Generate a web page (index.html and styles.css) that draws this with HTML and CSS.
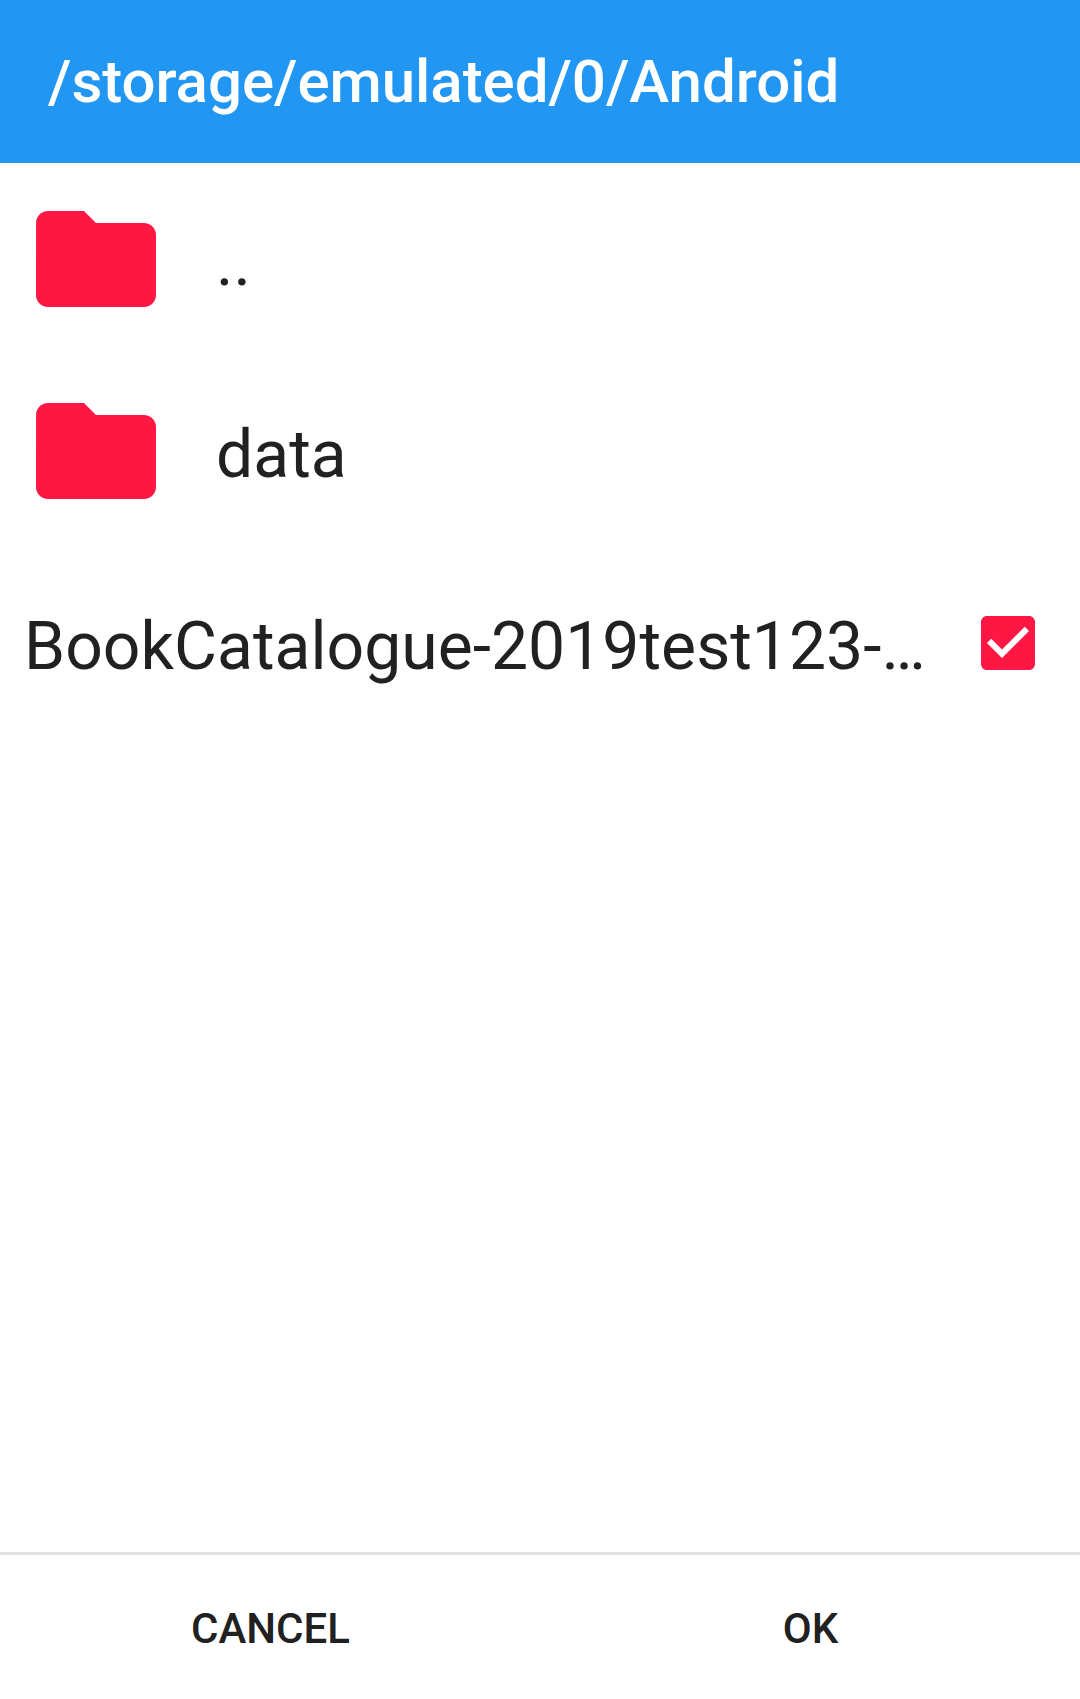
FILE: index.html
```html
<!DOCTYPE html>
<html lang="en">
<head>
<meta charset="utf-8">
<title>Choose a file</title>
<link rel="stylesheet" href="styles.css">
</head>
<body>
<header class="header">/storage/emulated/0/Android</header>
<main class="list">
  <div class="row">
    <svg class="folder" viewBox="0 0 24 24"><path d="M10 4H4c-1.1 0-1.99.9-1.99 2L2 18c0 1.1.9 2 2 2h16c1.1 0 2-.9 2-2V8c0-1.1-.9-2-2-2h-8l-2-2z"/></svg>
    <span class="name">..</span>
  </div>
  <div class="row">
    <svg class="folder" viewBox="0 0 24 24"><path d="M10 4H4c-1.1 0-1.99.9-1.99 2L2 18c0 1.1.9 2 2 2h16c1.1 0 2-.9 2-2V8c0-1.1-.9-2-2-2h-8l-2-2z"/></svg>
    <span class="name">data</span>
  </div>
  <div class="row file">
    <span class="name">BookCatalogue-2019test123-…</span>
    <svg class="checkbox" viewBox="0 0 24 24"><path d="M19 3H5c-1.11 0-2 .9-2 2v14c0 1.1.89 2 2 2h14c1.11 0 2-.9 2-2V5c0-1.1-.89-2-2-2zm-9 14l-5-5 1.41-1.41L10 14.17l7.59-7.59L19 8l-9 9z"/></svg>
  </div>
</main>
<footer class="actions">
  <button class="action">CANCEL</button>
  <button class="action">OK</button>
</footer>
</body>
</html>
```
FILE: styles.css
```css
* { box-sizing: border-box; }
body {
  margin: 0;
  height: 1699px;
  display: flex;
  flex-direction: column;
  background: #fff;
  color: #212121;
  font-family: Roboto, sans-serif;
}
.header {
  height: 163px;
  padding-left: 48px;
  background: #2196f3;
  color: #fff;
  font-size: 60px;
  font-weight: 500;
  letter-spacing: -0.03px;
  line-height: 163px;
  white-space: nowrap;
}
.list { flex: 1; }
.row {
  height: 192px;
  display: flex;
  align-items: center;
}
.folder {
  width: 144px;
  height: 144px;
  margin: 0 48px 0 24px;
  fill: #ff1744;
}
.name {
  padding-top: 6px;
  font-size: 66px;
  letter-spacing: 0.03px;
  line-height: 77px;
  white-space: nowrap;
}
.file {
  justify-content: space-between;
  padding: 0 36px 0 24px;
}
.checkbox { width: 72px; height: 72px; fill: #ff1744; }
.actions {
  height: 147px;
  display: flex;
  border-top: 3px solid #e0e0e0;
}
.action {
  flex: 1;
  padding: 2px 0 0 1px;
  border: 0;
  background: none;
  color: #212121;
  font: 500 42px Roboto, sans-serif;
}
```
